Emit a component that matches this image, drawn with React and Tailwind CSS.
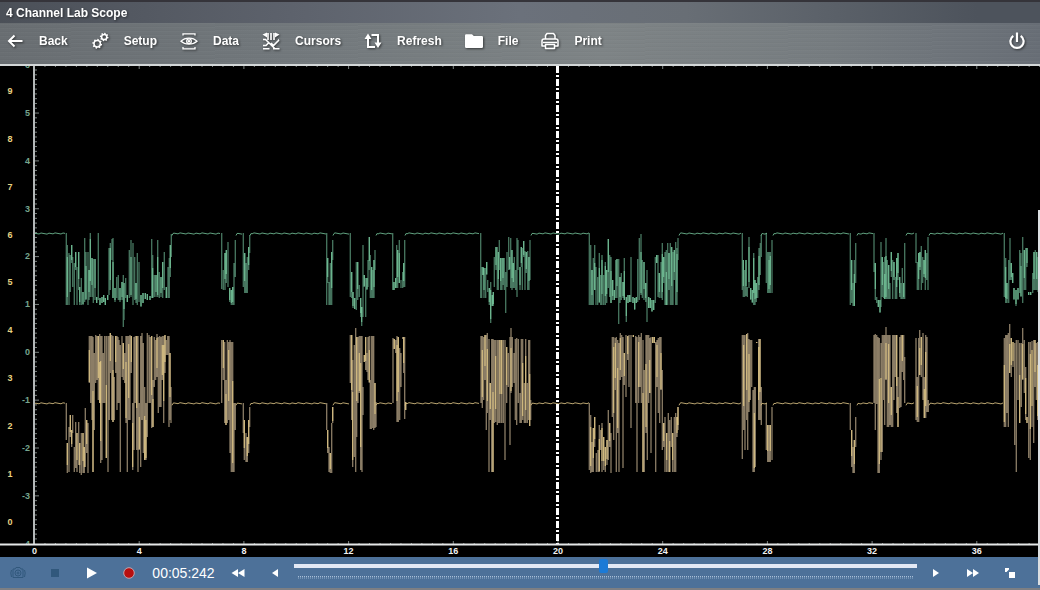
import React from "react";

const TOP = 66;
const STEP_Y = 47.85;
const STEP_X = 104.7;
const ORIGIN_X = 34;

// Stretches during which both channels sit on their idle level.
const IDLE = [
  [35, 66], [172, 221], [236, 242], [250, 327], [333, 350], [376, 392], [405, 480],
  [531, 589], [679, 742], [761, 767], [773, 850], [857, 874], [906, 915], [929, 1003],
];

// Bursts: "x top bottom" in thirds of a unit from the block's origin; * marks a strong stroke.
const GREEN = [
  { x: 40, y: 220, d: "79 40 255,82 75 255*,87 100 255,91 105 215,95 75 130*,98 110 200,103 130 255,107 95 150*,111 140 255,116 95 210*,119 200 255*,124 175 255,129 215 255*,134 55 245,138 95 240*,144 95 255,147 150 240*,151 38 230*,156 115 230*,160 118 250,165 118 240*,170 230 250*,175 38 240,180 235 255*,186 230 250*,191 225 245*,196 235 255*,203 225 240*,207 85 225,211 70 210*,216 58 120,219 55 235*,225 205 245*,230 170 235,235 165 240,240 205 245*,246 185 240*,250 165 320,252 190 300*,257 175 235,262 225 245*,268 90 235,273 60 230*,279 70 255,284 110 240,288 190 250*,292 100 255,297 125 245,303 225 262*,309 220 250*,316 218 238*,322 222 240*,330 228 240*,335 58 235,338 105 235*,343 165 230,348 165 230*,353 60 230*,358 155 235,363 170 230*,368 125 235*,373 95 210,379 200 235*,384 140 235,388 115 235,391 75 170*,394 42 110,545 40 208,550 150 210,555 100 210*,559 90 190*,564 65 200,569 205 245*,574 210 255*,578 200 255*,582 130 255,586 60 170,610 40 200,614 100 220*,618 130 220,622 110 220,626 80 150*,629 45 100" },
  { x: 310, y: 220, d: "50 40 255,53 115 190*,57 185 255,61 130 255,65 95 255*,68 60 120,121 40 230,125 155 235*,129 215 265*,134 235 268*,139 125 270,143 125 240*,148 195 230,152 235 290*,155 260 318*,159 75 290,163 165 200*,167 175 290,171 175 210*,174 120 200,178 52 150*,181 105 235,185 140 235*,189 150 235,192 120 235*,195 90 150,248 40 210,252 185 210*,257 175 205*,260 75 205,263 90 205*,268 60 190*,273 180 205,278 155 205,281 130 200*,284 60 200,512 40 235,515 140 235,519 140 165*,522 145 235*,527 145 235,530 125 165*,533 180 215,538 205 255*,542 185 308*,547 225 258*,550 215 258*,553 110 200,558 80 150*,562 80 210,565 95 210*,568 60 150,572 115 210*,576 115 210,579 115 195*,583 115 210,587 155 280,591 95 200,596 52 150,599 110 150*,602 55 205,606 90 210*,610 130 205*,613 110 205,617 150 210,621 55 232,624 60 150,630 140 210*,634 80 140*,637 85 210,641 62 110*,645 92 210,649 95 160*,653 92 210,657 110 210*,660 60 180" },
  { x: 550, y: 220, d: "118 40 255,122 75 255,126 150 255*,130 115 255,134 75 210*,138 140 255,143 170 255,148 100 250*,152 165 255,156 105 255*,161 165 255,166 125 255*,170 150 250*,175 58 205*,179 105 230,183 110 250*,188 180 240*,193 210 240*,197 120 235,201 118 235*,206 118 312,210 170 250*,214 160 240,219 185 235*,223 115 240*,229 230 305*,234 225 250*,239 225 245*,243 112 245,249 230 250*,254 235 270*,259 230 250*,263 118 245,268 55 240,273 42 225*,277 120 235,282 125 240*,287 190 245*,291 150 305,296 230 265*,301 235 265*,306 240 275*,311 240 270*,316 110 250,320 105 130*,324 105 230,328 160 235*,333 125 235,337 70 240*,341 110 190*,345 95 255,349 90 255*,353 70 255,357 100 210*,361 70 255,365 80 255*,369 95 255,373 90 180*,377 65 255,381 85 255*,384 55 120,577 40 210,580 120 230*,584 150 230,588 120 228*,592 200 230,597 52 205*,602 205 240*,607 210 250*,611 100 255*,615 180 255*,619 190 245*,623 170 235,627 85 210*,631 70 165,634 45 110,649 40 190,653 95 220,657 95 220*,661 95 220*,666 60 220" },
  { x: 800, y: 200, d: "151 100 315,155 180 310*,159 250 318,163 180 318*,167 130 250,222 100 215,226 190 300*,230 290 310,235 300 320*,240 300 340*,243 125 320,247 170 290*,251 185 295,254 170 297*,258 115 297*,262 180 297,266 195 297*,270 250 297,274 155 230*,278 180 297,282 185 240*,286 230 297,290 175 297*,294 160 240*,299 230 290*,303 250 297,307 205 297,311 250 297*,314 130 297,348 100 190,352 185 270,356 160 270*,360 155 210*,364 138 270,368 170 250,372 180 230*,376 150 270*,380 160 240,384 110 270,613 100 290,617 175 310*,621 250 310*,626 180 310,630 115 240,634 190 240*,638 220 250*,642 265 300*,648 270 318*,654 265 300*,659 150 280,663 160 290*,668 110 310,673 150 270*,677 145 270,681 145 200*,686 275 285*,692 275 285*,698 220 280,702 155 270*,706 150 270,710 155 270*,714 170 275" },
];

const YELLOW = [
  { x: 40, y: 220, d: "79 549 660,82 670 760*,87 620 755,91 585 650*,95 630 680*,98 585 640,103 680 755,107 605 745,111 640 755*,116 605 735,119 670 760*,124 640 765,129 640 760*,133 680 760*,136 565 740,140 600 700*,144 610 760,148 347 490*,152 347 549,156 347 600,159 350 755*,163 400 630,167 345 490,171 347 480,175 347 540*,179 342 549*,182 347 730*,186 347 720,190 400 549,194 347 549,199 347 715*,204 347 755,208 347 600,211 338 460*,215 345 600,219 347 605*,223 470 600,227 347 460*,231 347 570,234 350 549,237 360 549,241 375 755,246 347 470,250 370 480*,254 400 490,258 347 610*,262 347 755,266 347 600*,270 345 600,274 347 460*,278 549 750*,282 350 690,286 347 549,290 347 690*,294 347 755,298 549 690*,302 347 740,306 340 600,310 370 700,314 500 720*,318 549 720*,322 338 650,327 345 549,331 350 549,335 347 625*,339 480 620*,343 350 500,347 360 480,351 342 470*,355 350 580,359 347 560,363 350 560,367 347 480*,371 347 610*,375 345 460*,379 360 405,383 347 405,387 347 620,390 400 600*,393 500 610,545 360 549,550 360 480*,554 365 610,558 480 615*,562 360 610,566 365 600*,570 360 700,574 365 755,578 365 755*,582 549 755,586 549 630,610 549 640,613 600 720*,618 640 725,622 650 725*,626 600 700*,629 560 620" },
  { x: 310, y: 220, d: "50 549 630,53 630 700*,57 680 755,61 700 760*,65 610 760,68 560 610*,121 345 490,125 345 600*,128 420 740*,133 375 710,137 325 755,140 350 650*,144 350 550,148 348 520*,152 348 750*,156 348 755,159 500 585,163 405 425*,167 350 450*,171 400 455,174 350 480,178 348 490*,181 480 628,184 348 628,188 348 625,191 348 630,195 490 625*,198 545 620,249 355 549,253 358 388*,257 360 400,261 348 605*,265 350 605*,269 385 600,273 400 500,278 352 358,281 350 460*,284 352 598,287 545 570*,513 347 549,517 347 565*,521 350 540,525 345 480*,529 345 630,532 340 580*,537 358 755,541 490 600*,545 358 755,549 358 755*,553 360 610,557 360 605*,562 360 615,566 360 610,570 360 610*,575 360 610*,580 360 610,585 360 720,590 380 550*,595 400 500,600 350 675,603 325 520*,607 350 500,612 400 490,616 358 600,620 355 615,625 358 550,630 520 610,634 358 610,638 358 600*,643 490 610,647 358 610*,652 490 610,656 360 600,659 360 618*,662 540 600" },
  { x: 550, y: 220, d: "118 549 750,122 585 760*,126 665 755,130 625 755*,134 590 680*,139 700 755,144 690 755,148 615 755*,152 630 690,156 610 755*,161 650 750*,166 680 755*,171 660 735*,175 570 720,179 610 680*,183 640 760,187 350 590,191 350 660*,196 355 510*,199 350 755,203 360 640*,207 370 755,211 340 480*,215 345 470,219 350 745,223 400 495*,228 345 530,233 348 420*,237 345 500,243 345 625,250 346 350*,257 348 549,261 350 755,266 345 549*,270 350 500,274 338 549,279 360 755*,283 450 755,288 345 640*,292 345 720,296 345 549,299 355 520*,303 350 700,308 350 370*,313 352 370*,317 365 755,321 360 500*,325 355 580,329 350 610,333 350 510*,337 450 690,341 610 680*,345 590 755,350 640 755*,355 580 755,359 600 755*,364 590 680,368 640 755*,373 590 755,377 580 755,381 590 650*,384 560 630*,577 345 718,581 345 630*,585 345 690,590 342 600*,593 338 690,597 358 575*,601 360 540,605 360 500,609 510 755,613 500 755*,616 500 740,620 365 370*,626 358 600*,630 358 600*,634 500 615,649 549 690,653 615 725*,657 615 725,661 615 725*,666 560 720" },
  { x: 800, y: 200, d: "151 609 690,155 690 800*,159 740 818,163 720 818*,167 650 740,222 405 610,226 402 690,230 405 612,234 410 818,238 415 818*,243 430 780*,247 405 755,251 405 600,254 405 675,258 380 540*,262 405 680,266 405 680*,270 405 675,274 560 680*,278 405 680,282 405 600,286 405 530,290 405 640*,294 530 680*,299 410 625,303 405 620,307 405 515*,311 405 540,314 470 610,348 415 660,352 530 665*,356 415 665,359 390 525*,364 410 530*,369 400 600,373 530 655*,377 405 655*,381 410 635,385 600 635,613 415 680*,617 405 680,621 405 640,625 400 680,629 372 520*,634 415 530*,639 425 500*,644 430 735,649 420 815,654 420 600,659 430 670*,664 430 620,668 385 540*,673 420 580,677 500 660*,681 650 670*,686 425 775,691 425 780*,696 422 680*,701 420 730,705 420 560*,709 430 600,713 425 660*" },
];

function strokes(blocks) {
  let soft = "";
  let strong = "";
  blocks.forEach((b) => {
    b.d.split(",").forEach((item) => {
      const bright = item.endsWith("*");
      const [x, t, e] = item.replace("*", "").split(" ").map(Number);
      const px = (b.x + x / 3).toFixed(1);
      const top = Math.round(b.y + t / 3);
      const end = Math.round(b.y + e / 3);
      soft += `M${px} ${top}V${end}`;
      if (bright) {
        const len = end - top;
        const from = len > 40 ? top + Math.round(len * ((x % 5) / 10)) : top;
        strong += `M${px} ${from}V${Math.min(end, from + Math.round(len * 0.6) + 4)}`;
      }
    });
  });
  return { soft, strong };
}

function idle(y) {
  return IDLE.map(([a, b], n) => {
    let d = `M${a} ${y + (n ? 2 : 0)}L${a + 1} ${y}`;
    for (let x = a + 2; x <= b; x += 2) d += `L${x} ${y + (((x * 7 + n * 5) % 11) - 5) / 8}`;
    return d;
  }).join("");
}

function ticks(count, draw) {
  return Array.from({ length: count }, (_, i) => draw(i)).join("");
}

function Trace({ blocks, level, soft, strong }) {
  const s = strokes(blocks);
  return (
    <g fill="none">
      <path d={s.soft} stroke={soft} strokeWidth="1.3" />
      <path d={s.strong} stroke={strong} strokeWidth="1.1" />
      <path d={idle(level)} stroke={strong} opacity="0.85" />
    </g>
  );
}

function Scope() {
  const leftTicks = ticks(100, (i) => `M35 ${65.2 + i * 4.785}h${i % 10 === 0 ? 4 : 2}`);
  const xTicks = ticks(97, (i) => {
    const x = 34.5 + i * 10.47;
    const big = i % 10 === 0;
    return `M${x} 66v${big ? 3 : 1}M${x} 544v${big ? -3 : -1}`;
  });
  return (
    <svg viewBox="0 66 1040 491" role="img" aria-label="Oscilloscope traces" className="block h-auto w-full bg-black">
      <path d={leftTicks + xTicks} stroke="#7b8280" strokeWidth="1" />
      <g fontFamily="'Liberation Sans', Arial, sans-serif" fontSize="9" fontWeight="700">
        <g fill="#e6d283" textAnchor="middle">
          {Array.from({ length: 10 }, (_, i) => (
            <text key={i} x="10" y={94 + i * STEP_Y}>{9 - i}</text>
          ))}
        </g>
        <g fill="#76a58f" textAnchor="end">
          {Array.from({ length: 11 }, (_, i) => (
            <text key={i} x="30" y={68 + i * STEP_Y}>{6 - i}</text>
          ))}
        </g>
      </g>
      <Trace blocks={GREEN} level={233.5} soft="#487861" strong="#72c096" />
      <Trace blocks={YELLOW} level={403.3} soft="#8b7d66" strong="#dac284" />
      <path d={`M${ORIGIN_X} ${TOP}V545`} stroke="#b4b8b8" strokeWidth="2" />
      <path d="M557.5 66V544" stroke="#fff" strokeWidth="3" strokeDasharray="7 2 2 2" />
      <rect x="0" y="545" width="1040" height="12" fill="#000" />
      <path d="M0 544.5H1040" stroke="#e6e8e8" strokeWidth="2" />
      <g fill="#f2f2f2" textAnchor="middle" fontFamily="'Liberation Sans', Arial, sans-serif" fontSize="9" fontWeight="700">
        {Array.from({ length: 10 }, (_, i) => (
          <text key={i} x={34.5 + i * STEP_X} y="554">{i * 4}</text>
        ))}
      </g>
    </svg>
  );
}

const line = { fill: "none", stroke: "currentColor", strokeWidth: 1.5 };

function Gear({ x, y, r }) {
  const teeth = ticks(8, (i) => {
    const a = (i * Math.PI) / 4 + 0.2;
    return `M${x + Math.cos(a) * r} ${y + Math.sin(a) * r}L${x + Math.cos(a) * (r + 1.7)} ${y + Math.sin(a) * (r + 1.7)}`;
  });
  return (
    <g {...line} strokeWidth="1.5">
      <circle cx={x} cy={y} r={r} />
      <path d={teeth} />
    </g>
  );
}

const ICONS = {
  Back: <path d="M16.500 9H3M8.500 3.500L3 9l5.500 5.500" {...line} strokeWidth="2" />,
  Setup: (
    <>
      <Gear x={6.2} y={11.8} r={3.2} />
      <Gear x={13.2} y={5} r={2.6} />
    </>
  ),
  Data: (
    <g {...line} strokeWidth="1.3">
      <path d="M3 3.500V1.800h12v1.700M3 15v1.800h12V15" />
      <path d="M1 9.200C5 5 13 5 17 9.200C13 13 5 13 1 9.200Z" />
      <circle cx="9" cy="9.200" r="2.300" />
      <circle cx="9" cy="9.200" r=".6" fill="currentColor" />
    </g>
  ),
  Cursors: (
    <g {...line} strokeWidth="1.6">
      <path d="M6 1v7M9 1v7M12 1v7" />
      <path d="M.5 2.500L5 .5v5zM17.500 2.500L13 .5v5z" fill="currentColor" stroke="none" />
      <path d="M1 7.500h2.500L13 16.800M1 13.500h3L6.500 11M17 8l-5.500 5.500L9 11M1 16.800h6.500M11 16.800h6.500M17 8h-1" />
    </g>
  ),
  Refresh: (
    <g {...line} strokeWidth="2">
      <path d="M4 7v8h7M7.500 3H14v8" />
      <path d="M4 1.500L.5 7h7zM14 16l3.500-5.500h-7z" fill="currentColor" stroke="none" />
    </g>
  ),
  File: <path d="M0 3.500Q0 2.200 1.200 2.200H7L8.800 4H16.800Q18 4 18 5.200V14.800Q18 16 16.800 16H1.200Q0 16 0 14.800Z" fill="currentColor" />,
  Print: (
    <g {...line} strokeWidth="1.500" strokeLinejoin="round">
      <path d="M4.500 7V3.500L6 1.500h6.500L14 3.500V7" />
      <path d="M4 14H1V9Q1 7 3 7h12q2 0 2 2v5h-3M2 10.500h14" />
      <path d="M4.500 12.500h9v4h-9z" />
    </g>
  ),
};

function ToolButton({ name }) {
  return (
    <button type="button" className="flex items-center gap-[15px] drop-shadow-[1px_1px_1px_rgba(0,0,0,0.55)]">
      <svg viewBox="0 0 18 18" className="size-[18px] shrink-0" aria-hidden="true">{ICONS[name]}</svg>
      <span>{name}</span>
    </button>
  );
}

function PlayerButton({ label, disabled, children }) {
  return (
    <button type="button" aria-label={label} disabled={disabled} className="flex h-full w-9 shrink-0 items-center justify-center text-white disabled:text-[#31587c]">
      <svg viewBox="0 0 16 16" className="size-4" fill="currentColor" aria-hidden="true">{children}</svg>
    </button>
  );
}

export default function App() {
  return (
    <main className="relative bg-black font-['Liberation_Sans',Arial,sans-serif] text-xs font-bold text-white">
      <header className="border-b-2 border-[#d3d7d8] bg-[repeating-linear-gradient(179.600deg,rgba(255,255,255,0.02)_0_1px,transparent_1px_3px,rgba(0,0,0,0.02)_3px_4px),linear-gradient(90deg,#696e72,#71777b_25%,#7e8486_58%,#767c80_80%,#686e76)]">
        <h1 className="flex h-[23px] items-center border-t-2 border-[#35343a] bg-[linear-gradient(90deg,#4b5058,#5d626c_28%,#6b717b_50%,#686e75_66%,#4d535c_94%)] px-1.5 text-xs/4">
          <span className="drop-shadow-[1px_1px_1px_rgba(0,0,0,0.5)]">4 Channel Lab Scope</span>
        </h1>
        <nav className="flex h-[41px] items-center justify-between pr-[14px] pb-[5px] pl-1.5">
          <div className="flex items-center gap-[23px]">
            {["Back", "Setup", "Data", "Cursors", "Refresh", "File", "Print"].map((n) => (
              <ToolButton key={n} name={n} />
            ))}
          </div>
          <button type="button" aria-label="Power" className="drop-shadow-[1px_1px_1px_rgba(0,0,0,0.55)]">
            <svg viewBox="0 0 18 18" className="size-[18px]" fill="none" stroke="currentColor" strokeWidth="2.200" aria-hidden="true">
              <path d="M9 .5V10M5.300 3.900a6.600 6.600 0 1 0 7.400 0" />
            </svg>
          </button>
        </nav>
      </header>

      <Scope />

      <footer className="flex h-[33px] items-center gap-px border-b-2 border-[#7d7f83] bg-[#4d7199] pr-3">
        <PlayerButton label="Snapshot" disabled>
          <g fill="none" stroke="currentColor">
            <path d="M5 4l1-1.500h4L11 4h2v8.500H3V4zM1.500 5L.8 8l.7 4M14.500 5l.7 3-.7 4" />
            <circle cx="8" cy="8" r="3" />
            <path d="M8 6.500v3M6.500 8h3" />
          </g>
        </PlayerButton>
        <PlayerButton label="Stop" disabled><path d="M4 4h8v8H4z" /></PlayerButton>
        <PlayerButton label="Play"><path d="M3 2.500L13 8L3 13.500z" /></PlayerButton>
        <PlayerButton label="Record"><circle cx="8" cy="8" r="5.300" fill="#b80f0f" stroke="#c3a3ad" strokeWidth="1" /></PlayerButton>
        <output className="w-[71px] shrink-0 text-center text-sm font-normal">00:05:242</output>
        <PlayerButton label="Rewind"><path d="M8 4v8L1.500 8zM14.500 4v8L8 8z" /></PlayerButton>
        <PlayerButton label="Previous frame"><path d="M11 4v8L5 8z" /></PlayerButton>
        <div className="flex h-full flex-1 flex-col gap-[3px] pt-0.5">
          <input
            type="range"
            aria-label="Playback position"
            min="0"
            max="1000"
            defaultValue="497"
            className="h-[14px] w-full appearance-none bg-transparent [&::-webkit-slider-runnable-track]:h-1 [&::-webkit-slider-runnable-track]:bg-[#e3e9f5] [&::-webkit-slider-thumb]:-mt-[5px] [&::-webkit-slider-thumb]:h-[14px] [&::-webkit-slider-thumb]:w-[9px] [&::-webkit-slider-thumb]:appearance-none [&::-webkit-slider-thumb]:rounded-[2px] [&::-webkit-slider-thumb]:bg-[#1b7ad6]"
          />
          <div className="mr-1 ml-1 h-[3px] border-t border-dotted border-[#a9bfd8] bg-[repeating-linear-gradient(90deg,#7090b2_0_1px,transparent_1px_2px)]" />
        </div>
        <PlayerButton label="Next frame"><path d="M5 4v8l6-4z" /></PlayerButton>
        <PlayerButton label="Fast forward"><path d="M2 4v8l6-4zM8 4v8l6-4z" /></PlayerButton>
        <PlayerButton label="Restore size"><path d="M7 7h6v6H7zM3 3h4v1.500L4.500 7H3z" /></PlayerButton>
      </footer>
      <div className="absolute top-[210px] right-0 bottom-[5px] w-0.5 bg-[#dcdfe2]" />
    </main>
  );
}
